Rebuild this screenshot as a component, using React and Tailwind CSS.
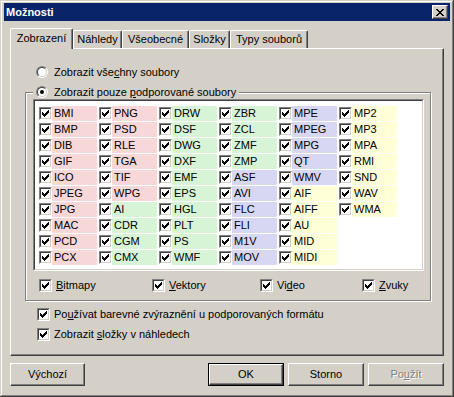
import React from "react";

const FILL = {
  r: "bg-[#f7d7d7]",
  g: "bg-[#d7f4d7]",
  b: "bg-[#d7d7f4]",
  y: "bg-[#ffffd7]",
};

const columns = [
  [["BMI", "r"], ["BMP", "r"], ["DIB", "r"], ["GIF", "r"], ["ICO", "r"], ["JPEG", "r"], ["JPG", "r"], ["MAC", "r"], ["PCD", "r"], ["PCX", "r"]],
  [["PNG", "r"], ["PSD", "r"], ["RLE", "r"], ["TGA", "r"], ["TIF", "r"], ["WPG", "r"], ["AI", "g"], ["CDR", "g"], ["CGM", "g"], ["CMX", "g"]],
  [["DRW", "g"], ["DSF", "g"], ["DWG", "g"], ["DXF", "g"], ["EMF", "g"], ["EPS", "g"], ["HGL", "g"], ["PLT", "g"], ["PS", "g"], ["WMF", "g"]],
  [["ZBR", "g"], ["ZCL", "g"], ["ZMF", "g"], ["ZMP", "g"], ["ASF", "b"], ["AVI", "b"], ["FLC", "b"], ["FLI", "b"], ["M1V", "b"], ["MOV", "b"]],
  [["MPE", "b"], ["MPEG", "b"], ["MPG", "b"], ["QT", "b"], ["WMV", "b"], ["AIF", "y"], ["AIFF", "y"], ["AU", "y"], ["MID", "y"], ["MIDI", "y"]],
  [["MP2", "y"], ["MP3", "y"], ["MPA", "y"], ["RMI", "y"], ["SND", "y"], ["WAV", "y"], ["WMA", "y"]],
];

function CheckBox() {
  return (
    <span className="flex size-[13px] shrink-0 border border-t-[#808080] border-l-[#808080] border-b-white border-r-white">
      <span className="flex size-full items-center justify-center border border-t-[#404040] border-l-[#404040] border-b-[#d4d0c8] border-r-[#d4d0c8] bg-white">
        <svg width="7" height="7" viewBox="0 0 7 7" shapeRendering="crispEdges">
          <path d="M0 2h1v3H0zM1 3h1v3H1zM2 4h1v3H2zM3 3h1v3H3zM4 2h1v3H4zM5 1h1v3H5zM6 0h1v3H6z" fill="#000" />
        </svg>
      </span>
    </span>
  );
}

function Radio({ checked }) {
  return (
    <span className="flex size-[12px] shrink-0 rounded-full border border-t-[#808080] border-l-[#808080] border-b-white border-r-white">
      <span className="flex size-full items-center justify-center rounded-full border border-t-[#404040] border-l-[#404040] border-b-[#d4d0c8] border-r-[#d4d0c8] bg-white">
        {checked && <span className="size-[4px] rounded-full bg-black" />}
      </span>
    </span>
  );
}

function Button({ children, isDefault, disabled, className = "" }) {
  const face = (
    <span className="flex size-full items-center justify-center border border-t-white border-l-white border-b-[#404040] border-r-[#404040] shadow-[inset_-1px_-1px_#808080]">
      {children}
    </span>
  );
  return (
    <div className={`flex h-[23px] ${isDefault ? "border border-black" : ""} ${disabled ? "text-[#808080] [text-shadow:1px_1px_#fff]" : ""} ${className}`}>
      {face}
    </div>
  );
}

function Tab({ label, active, width }) {
  return active ? (
    <div className={`relative z-10 -mb-px flex h-[21px] ${width} items-center justify-center rounded-t-[2px] border-l border-t border-r border-l-white border-t-white border-r-[#404040] bg-[#d4d0c8] pb-[2px] shadow-[inset_-1px_0_#808080]`}>
      {label}
    </div>
  ) : (
    <div className={`flex h-[18px] ${width} items-center justify-center rounded-t-[2px] border-l border-t border-r border-l-white border-t-white border-r-[#404040] shadow-[inset_-1px_0_#808080]`}>
      {label}
    </div>
  );
}

function Option({ children, className = "" }) {
  return (
    <div className={`flex h-[16px] items-center ${className}`}>
      <CheckBox />
      <span className="ml-[4px] whitespace-nowrap">{children}</span>
    </div>
  );
}

export default function App() {
  return (
    <div className="flex h-[397px] w-[454px] flex-col bg-[#d4d0c8] px-[4px] pt-[3px] font-['Liberation_Sans',Arial,sans-serif] text-[11px] leading-[13px] text-black shadow-[inset_-1px_-1px_#404040,inset_1px_1px_#d4d0c8,inset_-2px_-2px_#808080,inset_2px_2px_#ffffff]">
      {/* Title bar */}
      <div className="flex h-[18px] items-center justify-between bg-[#0a246a] px-[2px]">
        <span className="font-bold text-white">Možnosti</span>
        <span className="flex h-[14px] w-[16px] items-center justify-center border border-t-white border-l-white border-b-[#404040] border-r-[#404040] bg-[#d4d0c8] shadow-[inset_-1px_-1px_#808080]">
          <svg width="8" height="7" viewBox="0 0 8 7" shapeRendering="crispEdges">
            <path d="M0 0h2v1H0zM6 0h2v1H6zM1 1h2v1H1zM5 1h2v1H5zM2 2h4v1H2zM3 3h2v1H3zM2 4h4v1H2zM1 5h2v1H1zM5 5h2v1H5zM0 6h2v1H0zM6 6h2v1H6z" fill="#000" />
          </svg>
        </span>
      </div>

      <div className="flex flex-col px-[6px] pt-[7px]">
        {/* Tabs */}
        <div className="flex h-[20px] items-end">
          <Tab label="Zobrazení" active width="w-[63px]" />
          <Tab label="Náhledy" width="w-[49px]" />
          <Tab label="Všeobecné" width="w-[67px]" />
          <Tab label="Složky" width="w-[41px]" />
          <Tab label="Typy souborů" width="w-[78px]" />
        </div>

        {/* Panel */}
        <div className="flex h-[308px] flex-col border border-l-white border-t-white border-r-[#404040] border-b-[#404040] pl-[14px] pr-[12px] shadow-[inset_-1px_-1px_#808080]">
          <div className="ml-[11px] mt-[15px] flex h-[16px] items-center">
            <Radio />
            <span className="ml-[6px]">Zobrazit vše<u>c</u>hny soubory</span>
          </div>

          {/* Group */}
          <div className="mt-[12px] flex flex-col border border-[#808080] pb-[7px] shadow-[inset_1px_1px_#fff,1px_1px_#fff]">
            <div className="-mt-[8px] ml-[7px] flex h-[14px] w-fit items-center bg-[#d4d0c8] px-[3px]">
              <Radio checked />
              <span className="ml-[6px]">Zobrazit pouze <u>p</u>odporované soubory</span>
            </div>

            <div className="ml-[7px] mr-[6px] h-[172px] border border-t-[#808080] border-l-[#808080] border-b-white border-r-white">
              <div className="flex size-full border border-t-[#404040] border-l-[#404040] border-b-[#d4d0c8] border-r-[#d4d0c8] bg-white pl-[4px] pt-[4px]">
                {columns.map((col, i) => (
                  <div key={i} className="flex w-[60px] flex-col">
                    {col.map(([name, c]) => (
                      <div key={name} className="flex h-[16px] items-center">
                        <CheckBox />
                        <span className={`h-[15px] w-[45px] pl-[2px] leading-[15px] ${FILL[c]}`}>{name}</span>
                      </div>
                    ))}
                  </div>
                ))}
              </div>
            </div>

            <div className="ml-[13px] mt-[6px] flex">
              <Option className="w-[113px]"><u>B</u>itmapy</Option>
              <Option className="w-[108px]"><u>V</u>ektory</Option>
              <Option className="w-[102px]">Vi<u>d</u>eo</Option>
              <Option><u>Z</u>vuky</Option>
            </div>
          </div>

          <Option className="ml-[12px] mt-[5px]">Po<u>u</u>žívat barevné zvýraznění u podporovaných formátu</Option>
          <Option className="ml-[12px] mt-[4px]">Zobrazit <u>s</u>ložky v náhledech</Option>
        </div>

        {/* Buttons */}
        <div className="mt-[7px] flex">
          <Button className="w-[75px]">Výchozí</Button>
          <div className="ml-auto flex gap-[4px]">
            <Button isDefault className="w-[76px]">OK</Button>
            <Button className="w-[76px]">Storno</Button>
            <Button disabled className="w-[76px]">Po<u>u</u>žít</Button>
          </div>
        </div>
      </div>
    </div>
  );
}
